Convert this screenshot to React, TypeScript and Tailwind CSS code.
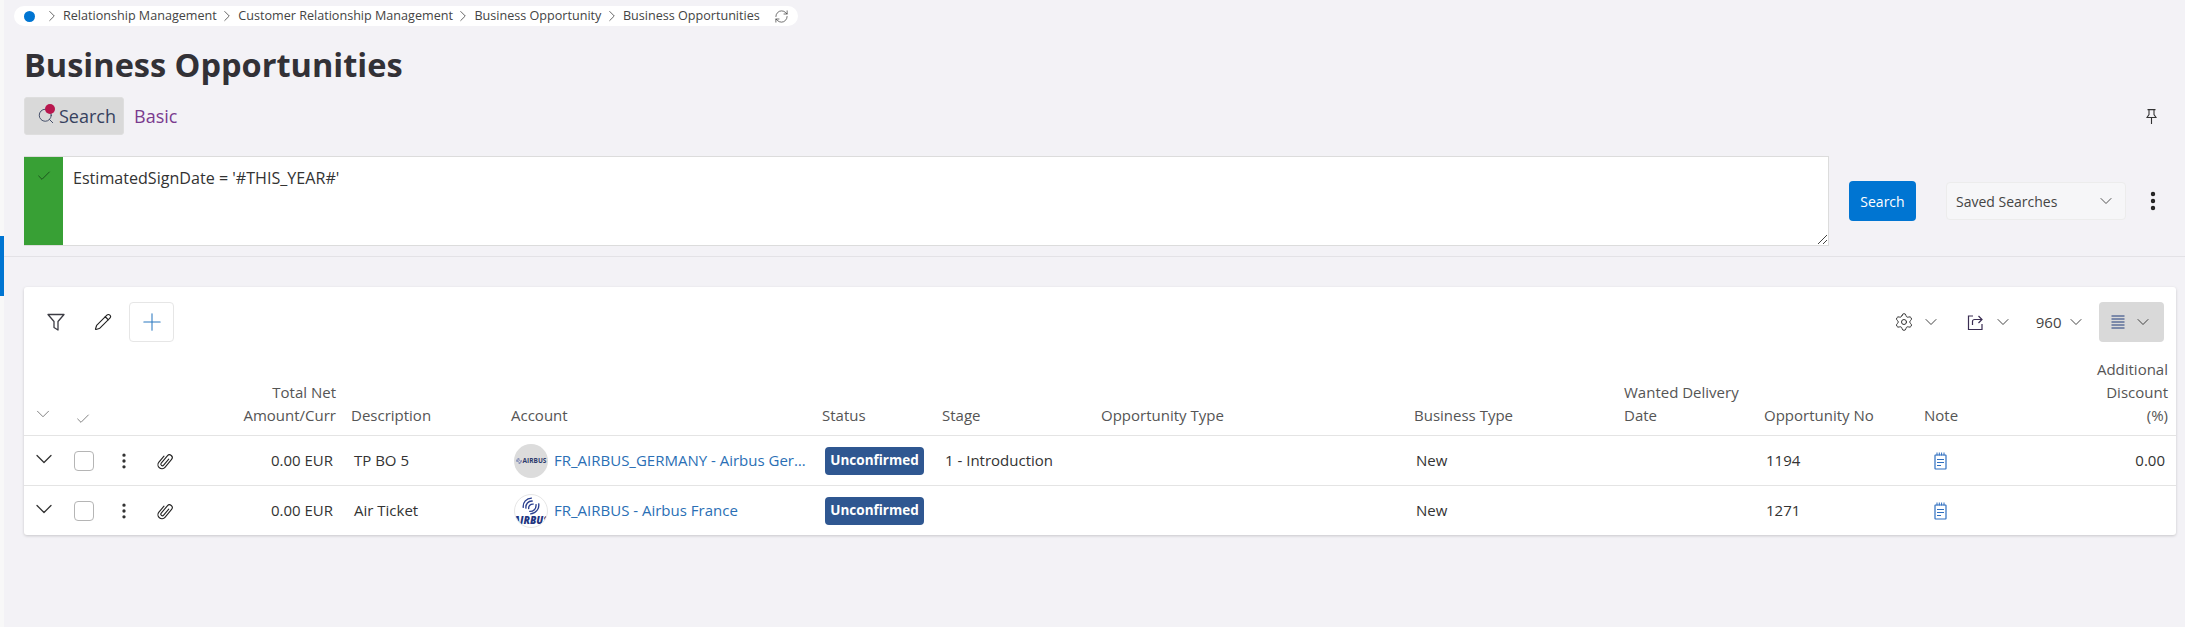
import React from "react";
import { Check, ChevronDown, ChevronRight, EllipsisVertical, Pencil, Plus, RefreshCw, Search, Settings } from "lucide-react";

const gridCols = "grid grid-cols-[40px_40px_40px_42px_158px_159px_311px_120px_159px_313px_210px_140px_160px_144px_116px]";

const crumbs = ["Relationship Management", "Customer Relationship Management", "Business Opportunity", "Business Opportunities"];

const rows = [
  { amount: "0.00 EUR", description: "TP BO 5", account: "FR_AIRBUS_GERMANY - Airbus Germany", logo: "grey", stage: "1 - Introduction", no: "1194", discount: "0.00" },
  { amount: "0.00 EUR", description: "Air Ticket", account: "FR_AIRBUS - Airbus France", logo: "white", stage: "", no: "1271", discount: "" },
];

const NoteIcon = () => (
  <svg width="13" height="18" viewBox="0 0 13 18" fill="none" stroke="#2f6fc0" strokeWidth="1.2">
    <rect x="1" y="3" width="11" height="14" rx="0.5" />
    <path d="M3 0.500v3M5.300 0.500v3M7.600 0.500v3M10 0.500v3" strokeWidth="1" />
    <path d="M3 7.500h7M3 10.500h7M3 13.500h4" />
  </svg>
);

const ClipIcon = () => (
  <svg width="19" height="19" viewBox="-12 -12 24 24" fill="none" stroke="#222" strokeWidth="1.400" strokeLinecap="round">
    <path transform="rotate(40)" d="M2 -4V6a2 2 0 0 1 -4 0V-6a3.500 3.500 0 0 1 7 0V7a5 5 0 0 1 -10 0V-3" />
  </svg>
);

const PinIcon = () => (
  <svg width="11" height="15" viewBox="0 0 11 15" fill="none" stroke="#333" strokeWidth="1.100">
    <path d="M1.500 .6h8M3 .6v5L1 8.500h9L8 5.600v-5M5.500 8.500V15" />
  </svg>
);

const ExportIcon = () => (
  <svg width="17" height="17" viewBox="0 0 17 17" fill="none" stroke="#3a2d52" strokeWidth="1.200">
    <path d="M6 2H1.500v13.500H15V10" />
    <path d="M5.500 11V7.500a2 2 0 0 1 2-2H15M11.500 2l3.500 3.500L11.500 9" />
  </svg>
);

const DensityIcon = () => (
  <svg width="14" height="14" viewBox="0 0 14 14" fill="none" stroke="#1f3a7a" strokeWidth="1">
    <path d="M0.500 1h13M0.500 4h13M0.500 7h13M0.500 10h13M0.500 13h13" />
  </svg>
);

const FilterIcon = () => (
  <svg width="18" height="18" viewBox="0 0 18 18" fill="none" stroke="#3c3c44" strokeWidth="1.300" strokeLinejoin="round">
    <path d="M1 1.500h16l-6 7v8.500l-4-2.500v-6z" />
  </svg>
);

const SwirlLogo = ({ size }: { size: number }) => (
  <svg width={size} height={size} viewBox="0 0 20 20" fill="none" stroke="#2a3f8f" strokeWidth="1.500">
    <path d="M1.500 12C.5 6 5 1 11 1.200M4.500 13C3.500 8 7 4 12 4.500M7.500 13.500C6.800 10 9.500 7.500 13 8M18.500 7c1.200 6-3.500 12-9.500 11.800M15.500 8c.8 5-3 8.500-7.500 8" />
  </svg>
);

const Logo = ({ kind }: { kind: string }) =>
  kind === "grey" ? (
    <div className="flex h-[34px] w-[34px] shrink-0 items-center justify-center gap-px overflow-hidden rounded-full bg-[#dcdcdc]">
      <SwirlLogo size={6} />
      <span className="text-[6.500px] font-bold text-[#2b3a6b]">AIRBUS</span>
    </div>
  ) : (
    <div className="flex h-[34px] w-[34px] shrink-0 flex-col items-center justify-center overflow-hidden rounded-full border border-[#e6e6e6] bg-white">
      <SwirlLogo size={18} />
      <span className="text-[10px] leading-[10px] font-extrabold whitespace-nowrap text-[#22357f] italic">AIRBUS</span>
    </div>
  );

const HeaderCell = ({ children, right }: { children?: React.ReactNode; right?: boolean }) => (
  <div className={`flex items-end px-2 pb-[8px] leading-[23px] text-[#555] ${right ? "justify-end text-right" : ""}`}>
    <div>{children}</div>
  </div>
);

export default function App() {
  return (
    <div className="flex h-[627px] w-[2185px] overflow-hidden bg-[#f3f2f6] font-['Open_Sans',sans-serif] text-[15px] text-[#333]">
      {/* Rail */}
      <div className="w-[4px] shrink-0 bg-[#f8f8f8]">
        <div className="mt-[236px] h-[60px] bg-[#0075d2]" />
      </div>

      <div className="flex min-w-0 flex-1 flex-col">
        {/* Breadcrumb */}
        <div className="mt-[6px] ml-[10px] flex h-[20px] w-[784px] items-center rounded-full bg-white pl-[10px] text-[12.600px] text-[#444]">
          <span className="mr-[8px] h-[11px] w-[11px] rounded-full bg-[#0075d2]" />
          {crumbs.map((c) => (
            <React.Fragment key={c}>
              <ChevronRight size={18} strokeWidth={1} className="mr-[2px] text-[#333]" />
              <span className="mr-[1.500px] whitespace-nowrap">{c}</span>
            </React.Fragment>
          ))}
          <RefreshCw size={15} strokeWidth={1.100} className="ml-[13px] text-[#333]" />
        </div>

        {/* Title */}
        <h1 className="mt-[16px] ml-[20px] text-[32.500px] leading-[46px] font-bold text-[#323136]">Business Opportunities</h1>

        {/* Tabs */}
        <div className="mt-[9px] ml-[20px] flex h-[38px] items-center">
          <div className="relative flex h-[38px] w-[100px] items-center rounded-[3px] border border-[#dedede] bg-[#d9d9d9] pl-[12px] text-[18px] text-[#36415e]">
            <Search size={18} strokeWidth={1.200} className="mr-[4px]" />
            <span>Search</span>
            <span className="absolute top-[6px] left-[20px] h-[10px] w-[10px] rounded-full bg-[#b8174e]" />
          </div>
          <span className="ml-[10px] text-[18px] text-[#7a3b8e]">Basic</span>
          <span className="mr-[28px] ml-auto"><PinIcon /></span>
        </div>

        {/* Query */}
        <div className="mt-[21px] ml-[20px] flex h-[90px] items-center">
          <div className="flex h-[90px] w-[1805px] border border-l-0 border-[#dcdcdc] bg-white">
            <div className="flex w-[39px] shrink-0 justify-center bg-[#38a035] pt-[11px]">
              <Check size={16} strokeWidth={1.300} className="text-[#17491a]" />
            </div>
            <div className="relative flex-1 pt-[9px] pl-[10px] text-[16.100px] text-[#333]">
              EstimatedSignDate = '#THIS_YEAR#'
              <svg width="11" height="11" viewBox="0 0 11 11" className="absolute right-0 bottom-0" fill="none" stroke="#444" strokeWidth="1">
                <path d="M1 10L10 1M6 10l4-4" />
              </svg>
            </div>
          </div>
          <button className="ml-[20px] h-[40px] w-[67px] rounded-[4px] bg-[#0075d2] text-[14px] text-white">Search</button>
          <div className="ml-[30px] flex h-[38px] w-[180px] items-center justify-between rounded-[4px] border border-[#ececec] bg-[#f6f6f8] pr-[9px] pl-[9px] text-[14px] text-[#444]">
            <span>Saved Searches</span>
            <ChevronDown size={20} strokeWidth={1.100} />
          </div>
          <EllipsisVertical size={24} strokeWidth={2.400} className="ml-[15px] text-[#222]" />
        </div>

        <div className="mt-[10px] h-px bg-[#e3e2e6]" />

        {/* Results card */}
        <div className="mt-[30px] ml-[20px] w-[2152px] rounded-[3px] bg-white shadow-[0_1px_3px_rgba(0,0,0,0.18)]">
          <div className="flex h-[55px] items-end pb-0 pl-[23px] text-[#333]">
            <div className="flex h-[40px] w-full items-center">
              <FilterIcon />
              <Pencil size={18} strokeWidth={1.500} className="ml-[29px] text-[#222]" />
              <div className="ml-[17px] flex h-[40px] w-[45px] items-center justify-center rounded-[4px] border border-[#e6e6e6]">
                <Plus size={28} strokeWidth={0.900} className="text-[#2a78c0]" />
              </div>
              <div className="ml-auto flex items-center pr-[12px]">
                <Settings size={20} strokeWidth={1.200} />
                <ChevronDown size={20} strokeWidth={1.100} className="ml-[7px]" />
                <span className="ml-[26.500px]"><ExportIcon /></span>
                <ChevronDown size={20} strokeWidth={1.100} className="ml-[8.500px]" />
                <span className="ml-[23px] text-[#444]">960</span>
                <ChevronDown size={20} strokeWidth={1.100} className="ml-[4.500px]" />
                <div className="ml-[13px] flex h-[40px] w-[65px] items-center justify-center gap-[8px] rounded-[4px] bg-[#d9d9d9]">
                  <DensityIcon />
                  <ChevronDown size={20} strokeWidth={1.100} />
                </div>
              </div>
            </div>
          </div>

          {/* Header */}
          <div className={`${gridCols} h-[94px] border-b border-[#e4e4e4]`}>
            <div className="flex items-end justify-center pb-[10px] pr-[2px]"><ChevronDown size={22} strokeWidth={0.800} className="text-[#555]" /></div>
            <div className="flex items-end justify-center pb-[8px] pr-[2px]"><Check size={16} strokeWidth={1} className="text-[#444]" /></div>
            <div />
            <div />
            <HeaderCell right>Total Net<br />Amount/Curr</HeaderCell>
            <div className="flex items-end pb-[8px] pl-[7px] leading-[23px] text-[#555]">Description</div>
            <HeaderCell>Account</HeaderCell>
            <HeaderCell>Status</HeaderCell>
            <HeaderCell>Stage</HeaderCell>
            <HeaderCell>Opportunity Type</HeaderCell>
            <HeaderCell>Business Type</HeaderCell>
            <HeaderCell>Wanted Delivery<br />Date</HeaderCell>
            <HeaderCell>Opportunity No</HeaderCell>
            <HeaderCell>Note</HeaderCell>
            <HeaderCell right>Additional<br />Discount<br />(%)</HeaderCell>
          </div>

          {/* Rows */}
          {rows.map((r, i) => (
            <div key={r.no} className={`${gridCols} items-center ${i === 0 ? "h-[50px] border-b border-[#e4e4e4]" : "h-[49px]"}`}>
              <div className="flex justify-center"><ChevronDown size={28} strokeWidth={1.100} className="mb-[4px]" /></div>
              <div className="flex justify-center"><div className="h-[20px] w-[20px] rounded-[4px] border border-[#b5b5b5] bg-white" /></div>
              <div className="flex justify-center"><EllipsisVertical size={20} strokeWidth={2} /></div>
              <div className="flex justify-center"><ClipIcon /></div>
              <div className="pr-[11px] text-right">{r.amount}</div>
              <div className="pl-[10px]">{r.description}</div>
              <div className="flex items-center pl-[11px]">
                <Logo kind={r.logo} />
                <a className="ml-[6px] w-[252px] truncate text-[#2a6fb5]">{r.account}</a>
              </div>
              <div className="pl-[11px]">
                <span className="inline-flex h-[28px] w-[99px] items-center justify-center rounded-[4px] bg-[#2f5791] text-[13.500px] font-bold text-white">Unconfirmed</span>
              </div>
              <div className="pl-[11px]">{r.stage}</div>
              <div />
              <div className="pl-[10px]">New</div>
              <div />
              <div className="pl-[10px]">{r.no}</div>
              <div className="pl-[18px]"><NoteIcon /></div>
              <div className="pr-[11px] text-right">{r.discount}</div>
            </div>
          ))}
        </div>
      </div>
    </div>
  );
}
